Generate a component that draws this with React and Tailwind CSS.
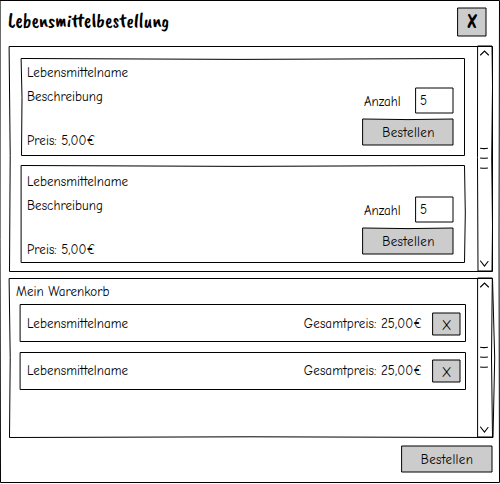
import React from "react";

const BODY = "font-['Comic_Neue','Comic_Sans_MS','Lato',sans-serif]";

function Sketch({ w, h, d, fill = "none", children }) {
  return (
    <svg className="pointer-events-none absolute left-0 top-0 overflow-visible" width={w} height={h} viewBox={`0 0 ${w} ${h}`}>
      <path d={d} fill={fill} stroke="#000" strokeWidth="1" strokeLinejoin="round" strokeLinecap="round" />
      {children}
    </svg>
  );
}

function SketchButton({ w, h, d, className, children }) {
  return (
    <button className={`relative flex shrink-0 items-center justify-center ${className}`}>
      <Sketch w={w} h={h} d={d} fill="#ccc" />
      <span className="relative">{children}</span>
    </button>
  );
}

function Scrollbar({ h, grip, d }) {
  return (
    <div className="relative w-[15px] shrink-0">
      <Sketch w={15} h={h} d={d}>
        <g fill="none" stroke="#000" strokeWidth="1.1" strokeLinecap="round">
          <path d={`M2.5 9 L6.5 5 L10.5 9 M2.5 ${h - 10} L6.5 ${h - 5} L10 ${h - 9.5}`} />
          <path d={`M2.5 ${grip + 0.3} q3.5 0.6 7 0 M2.5 ${grip + 10} q3.5 0.6 7 0 M2.5 ${grip + 20} q3.5 0.6 7 0`} />
        </g>
      </Sketch>
    </div>
  );
}

function Product({ d, className }) {
  return (
    <div className={`relative flex h-[98px] w-[444px] justify-between pl-1.5 pr-[11px] ${className}`}>
      <Sketch w={444} h={98} d={d} />
      <div className="flex flex-col leading-5 tracking-[0.06px]">
        <div>Lebensmittelname</div>
        <div className="mt-1">Beschreibung</div>
        <div className="mt-6">Preis: 5,00€</div>
      </div>
      <div className="flex w-[91px] flex-col pt-6">
        <div className="flex items-center justify-between">
          <span className="pl-px pt-[3px]">Anzahl</span>
          <div className="relative flex h-[26px] w-[38px] items-center pl-1">
            <Sketch w={38} h={26} d="M0 1 H37 V26 H0 Z" />
            <span className="pt-px">5</span>
          </div>
        </div>
        <SketchButton w={91} h={26} d="M0 1 L45 1.6 L90 1 V27 H0 Z" className="mt-[5px] h-[26px] w-[91px] pt-[3px] tracking-[0.35px]">Bestellen</SketchButton>
      </div>
    </div>
  );
}

function CartRow({ className }) {
  return (
    <div className={`relative flex h-[38px] w-[446px] items-center pl-[7px] pr-[5px] ${className}`}>
      <Sketch w={446} h={38} d="M0.5 0.5 H445.5 V37.5 H0.5 Z" />
      <span className="flex-1 tracking-[0.06px]">Lebensmittelname</span>
      <span className="mr-[11px] tracking-[0.1px]">Gesamtpreis: 25,00€</span>
      <SketchButton w={28} h={22} d="M0 0 H27 V22 H0 Z" className="h-[22px] w-[28px] pr-px pt-[2px] text-[14px]">X</SketchButton>
    </div>
  );
}

export default function App() {
  return (
    <main className={`relative h-[484px] w-[500px] overflow-hidden bg-white text-[13px] text-black ${BODY}`}>
      <Sketch w={500} h={484} d="M0.5 0.5 H499.5 L499 240 L499.5 482.5 H0.5 L0 240 Z" />
      <header className="flex h-[46px] justify-between pl-2 pr-[13px] pt-[7px]">
        <h1 className="whitespace-nowrap font-['Caveat_Brush','Caveat','Comic_Neue',cursive] text-[20px] font-normal leading-7 text-black">Lebensmittelbestellung</h1>
        <SketchButton w={30} h={30} d="M1 1 H29 V29 H1 Z" className="h-[30px] w-[30px] font-['Caveat_Brush','Caveat','Comic_Neue',cursive] text-[20px] font-normal text-black">X</SketchButton>
      </header>
      <section className="relative ml-[9px] flex h-[226px] w-[484px] justify-between">
        <Sketch w={484} h={226} d="M0.5 0.5 H483.5 V225.5 H0.5 L1.2 110 Z" />
        <div className="flex flex-col gap-[9px] pl-3 pt-3">
          <Product className="pt-[5px]" d="M0.5 0.5 L220 1.4 L443.5 0.5 V97.5 H0.5 L1 40 Z" />
          <Product className="pt-[7px]" d="M0.5 0.5 L220 1.4 L443.5 0.5 L444.3 48 L443.5 97.5 H0.5 Z" />
        </div>
        <Scrollbar h={225} grip={102} d="M0 0 H14 L14.5 40 L13.7 112 L14.5 180 L14 225 H0 L-0.5 112 Z" />
      </section>
      <section className="relative ml-[9px] mt-[6px] flex h-[160px] w-[484px] justify-between">
        <Sketch w={484} h={160} d="M0.5 0.5 H483.5 L485.7 80 L484 159.5 L240 158.8 L0.5 159.5 L1.2 80 Z" />
        <div className="flex flex-col pl-[11px]">
          <h2 className="-ml-1 h-[26px] pt-1 leading-5 tracking-[0.06px]">Mein Warenkorb</h2>
          <div className="flex flex-col gap-[10px]">
            <CartRow className="pt-0.5" />
            <CartRow className="" />
          </div>
        </div>
        <Scrollbar h={159} grip={69} d="M0 0 H14.3 L13.5 80 L14.5 159 H0 Z" />
      </section>
      <footer className="flex justify-end pr-[7px] pt-[7px]">
        <SketchButton w={92} h={27} d="M1 1 H91 V27 H1 Z" className="h-[27px] w-[92px] pt-[3px] tracking-[0.35px]">Bestellen</SketchButton>
      </footer>
    </main>
  );
}
